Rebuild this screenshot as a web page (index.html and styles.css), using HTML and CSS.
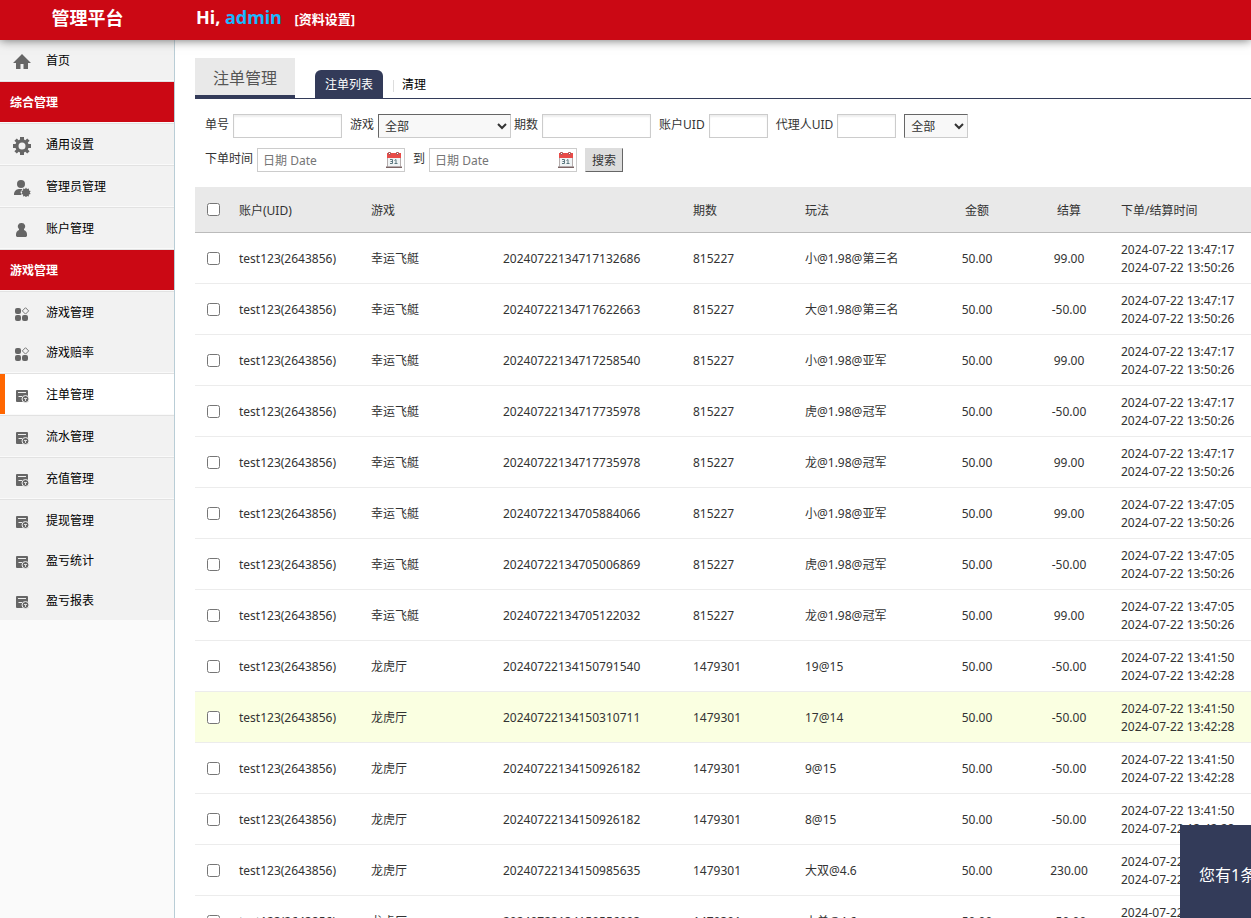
FILE: index.html
```html
<!DOCTYPE html>
<html lang="zh-CN">
<head>
<meta charset="UTF-8">
<title>管理平台</title>
<link rel="stylesheet" href="styles.css">
</head>
<body>
<svg class="sprite" aria-hidden="true">
	<symbol id="i-home" viewBox="0 0 18 18"><path d="M9 1 0 10h3v6h4.500v-5h3v5H15v-6h3z"/></symbol>
	<symbol id="i-gear" viewBox="0 0 18 18"><path fill-rule="evenodd" d="M7 0h4v2.600l1.400.6L14.200 1.400 16.600 3.800 14.800 5.600l.6 1.400H18v4h-2.600l-.6 1.400 1.800 1.800-2.400 2.400-1.800-1.800-1.400.6V18H7v-2.600l-1.400-.6-1.800 1.800-2.400-2.400 1.800-1.800L2.600 11H0V7h2.600l.6-1.400L1.400 3.800l2.400-2.400 1.800 1.800L7 2.600zM9 5.500a3.500 3.500 0 1 0 0 7 3.500 3.500 0 0 0 0-7z"/></symbol>
	<symbol id="i-admin" viewBox="0 0 18 18"><circle cx="8" cy="5" r="4"/><path d="M1 16c0-4 2-5.500 5-6h3.500l-2 3 1 3z"/><path d="m13 8.500 1 1.600 1.900-.6.1 1.900 1.700.6-1 1.500 1 1.500-1.800.6-.1 1.800-1.800-.4-1 1.400-1.100-1.400-1.800.4v-1.800l-1.800-.6 1-1.500-1-1.500 1.800-.6v-1.900l1.900.6z"/></symbol>
	<symbol id="i-user" viewBox="0 0 18 18"><path d="M8.500 2a3.500 3.500 0 0 1 2.500 6.200V9c2 .6 3 2.500 3 4.500V15l-1 1H4l-1-1v-1.500C3 11.500 4 9.600 6 9v-.8A3.500 3.500 0 0 1 8.500 2z"/></symbol>
	<symbol id="i-game" viewBox="0 0 18 18"><rect x="2" y="3" width="6" height="6" rx="2"/><rect x="2" y="10" width="6" height="6" rx="2"/><rect x="9" y="10" width="6" height="6" rx="2"/><path d="m12.500 2.700 3.200 3.200-3.200 3.200-3.200-3.200z" fill="none" stroke="#777"/></symbol>
	<symbol id="i-bill" viewBox="0 0 18 18"><rect x="3" y="3" width="12" height="12" rx="1"/><path d="M5 5.500h8M5.500 9.500H9" stroke="#eee" fill="none"/><circle cx="12.500" cy="12" r="3.500" stroke="#eee"/><path d="M11 11.500h3M12.500 11.500v2.500" stroke="#ddd" fill="none"/></symbol>
	<symbol id="i-cal" viewBox="0 0 16 16"><path d="M1 2h14v13H1z" fill="#f0f4f5"/><path d="M1 1h14v5H1z" fill="#e94b48"/><path d="M1.500 6v8.500M14.500 6v8.500" stroke="#b5adad"/><path d="M0 14.500h16v1.500H0z" fill="#7a6464"/><path d="M2.500.5h2v2h-2zM10.500.5h2v2h-2z" fill="#fff" stroke="#a55"/><path d="M4 7.500h2.500v4H4M4.500 9.500h2M8.500 8.500l1.500-1v4M8.500 11.500h3" fill="none" stroke="#5c7880"/></symbol>
</svg>
<header class="header">
	<h1 class="logo">管理平台</h1>
	<div class="hello">Hi, <span class="hello-name">admin</span> <a class="hello-set" href="#">[资料设置]</a></div>
</header>
<div class="wrap">
	<nav class="menu">
		<ul class="menu-group">
			<li><a href="#"><svg class="icon"><use href="#i-home"/></svg>首页</a></li>
		</ul>
		<h2 class="menu-title">综合管理</h2>
		<ul class="menu-group">
			<li><a href="#"><svg class="icon"><use href="#i-gear"/></svg>通用设置</a></li>
		</ul>
		<ul class="menu-group">
			<li><a href="#"><svg class="icon"><use href="#i-admin"/></svg>管理员管理</a></li>
		</ul>
		<ul class="menu-group">
			<li><a href="#"><svg class="icon"><use href="#i-user"/></svg>账户管理</a></li>
		</ul>
		<h2 class="menu-title">游戏管理</h2>
		<ul class="menu-group">
			<li><a href="#"><svg class="icon"><use href="#i-game"/></svg>游戏管理</a></li>
			<li><a href="#"><svg class="icon"><use href="#i-game"/></svg>游戏赔率</a></li>
		</ul>
		<ul class="menu-group active">
			<li><a href="#"><svg class="icon"><use href="#i-bill"/></svg>注单管理</a></li>
		</ul>
		<ul class="menu-group">
			<li><a href="#"><svg class="icon"><use href="#i-bill"/></svg>流水管理</a></li>
		</ul>
		<ul class="menu-group">
			<li><a href="#"><svg class="icon"><use href="#i-bill"/></svg>充值管理</a></li>
		</ul>
		<ul class="menu-group">
			<li><a href="#"><svg class="icon"><use href="#i-bill"/></svg>提现管理</a></li>
			<li><a href="#"><svg class="icon"><use href="#i-bill"/></svg>盈亏统计</a></li>
			<li><a href="#"><svg class="icon"><use href="#i-bill"/></svg>盈亏报表</a></li>
		</ul>
	</nav>
	<main class="main">
		<div class="tabs">
			<h3 class="tabs-title">注单管理</h3>
			<a class="tab current" href="#">注单列表</a>
			<a class="tab" href="#">清理</a>
		</div>
		<form class="search" method="get">
			<div class="search-row">
				<label for="tid">单号</label>
				<input type="text" id="tid" class="txt">
				<label for="gid">游戏</label>
				<select id="gid" class="sel sel-game"><option>全部</option></select>
				<label for="qs">期数</label>
				<input type="text" id="qs" class="txt">
				<label for="uid">账户UID</label>
				<input type="text" id="uid" class="txt txt-uid">
				<label for="fid">代理人UID</label>
				<input type="text" id="fid" class="txt txt-uid">
				<select id="status" class="sel" aria-label="状态"><option>全部</option></select>
			</div>
			<div class="search-row">
				<label for="start">下单时间</label>
				<span class="date"><input type="text" id="start" class="txt txt-date" placeholder="日期 Date"><svg class="date-icon"><use href="#i-cal"/></svg></span>
				<label for="end">到</label>
				<span class="date"><input type="text" id="end" class="txt txt-date" placeholder="日期 Date"><svg class="date-icon"><use href="#i-cal"/></svg></span>
				<button type="button" class="btn">搜索</button>
			</div>
		</form>
		<table class="list">
			<colgroup>
				<col class="c-check"><col class="c-name"><col class="c-name"><col class="c-order"><col class="c-issue"><col class="c-name"><col class="c-money"><col class="c-money"><col>
			</colgroup>
			<thead>
				<tr><th class="check"><input type="checkbox" aria-label="全选"></th><th>账户(UID)</th><th>游戏</th><th></th><th>期数</th><th>玩法</th><th class="mid">金额</th><th class="mid">结算</th><th>下单/结算时间</th></tr>
			</thead>
			<tbody>
				<tr><td class="check"><input type="checkbox" aria-label="选择"></td><td>test123(2643856)</td><td>幸运飞艇</td><td>20240722134717132686</td><td>815227</td><td>小@1.98@第三名</td><td class="mid">50.00</td><td class="mid">99.00</td><td>2024-07-22 13:47:17<br>2024-07-22 13:50:26</td></tr>
				<tr><td class="check"><input type="checkbox" aria-label="选择"></td><td>test123(2643856)</td><td>幸运飞艇</td><td>20240722134717622663</td><td>815227</td><td>大@1.98@第三名</td><td class="mid">50.00</td><td class="mid">-50.00</td><td>2024-07-22 13:47:17<br>2024-07-22 13:50:26</td></tr>
				<tr><td class="check"><input type="checkbox" aria-label="选择"></td><td>test123(2643856)</td><td>幸运飞艇</td><td>20240722134717258540</td><td>815227</td><td>小@1.98@亚军</td><td class="mid">50.00</td><td class="mid">99.00</td><td>2024-07-22 13:47:17<br>2024-07-22 13:50:26</td></tr>
				<tr><td class="check"><input type="checkbox" aria-label="选择"></td><td>test123(2643856)</td><td>幸运飞艇</td><td>20240722134717735978</td><td>815227</td><td>虎@1.98@冠军</td><td class="mid">50.00</td><td class="mid">-50.00</td><td>2024-07-22 13:47:17<br>2024-07-22 13:50:26</td></tr>
				<tr><td class="check"><input type="checkbox" aria-label="选择"></td><td>test123(2643856)</td><td>幸运飞艇</td><td>20240722134717735978</td><td>815227</td><td>龙@1.98@冠军</td><td class="mid">50.00</td><td class="mid">99.00</td><td>2024-07-22 13:47:17<br>2024-07-22 13:50:26</td></tr>
				<tr><td class="check"><input type="checkbox" aria-label="选择"></td><td>test123(2643856)</td><td>幸运飞艇</td><td>20240722134705884066</td><td>815227</td><td>小@1.98@亚军</td><td class="mid">50.00</td><td class="mid">99.00</td><td>2024-07-22 13:47:05<br>2024-07-22 13:50:26</td></tr>
				<tr><td class="check"><input type="checkbox" aria-label="选择"></td><td>test123(2643856)</td><td>幸运飞艇</td><td>20240722134705006869</td><td>815227</td><td>虎@1.98@冠军</td><td class="mid">50.00</td><td class="mid">-50.00</td><td>2024-07-22 13:47:05<br>2024-07-22 13:50:26</td></tr>
				<tr><td class="check"><input type="checkbox" aria-label="选择"></td><td>test123(2643856)</td><td>幸运飞艇</td><td>20240722134705122032</td><td>815227</td><td>龙@1.98@冠军</td><td class="mid">50.00</td><td class="mid">99.00</td><td>2024-07-22 13:47:05<br>2024-07-22 13:50:26</td></tr>
				<tr><td class="check"><input type="checkbox" aria-label="选择"></td><td>test123(2643856)</td><td>龙虎厅</td><td>20240722134150791540</td><td>1479301</td><td>19@15</td><td class="mid">50.00</td><td class="mid">-50.00</td><td>2024-07-22 13:41:50<br>2024-07-22 13:42:28</td></tr>
				<tr class="hover"><td class="check"><input type="checkbox" aria-label="选择"></td><td>test123(2643856)</td><td>龙虎厅</td><td>20240722134150310711</td><td>1479301</td><td>17@14</td><td class="mid">50.00</td><td class="mid">-50.00</td><td>2024-07-22 13:41:50<br>2024-07-22 13:42:28</td></tr>
				<tr><td class="check"><input type="checkbox" aria-label="选择"></td><td>test123(2643856)</td><td>龙虎厅</td><td>20240722134150926182</td><td>1479301</td><td>9@15</td><td class="mid">50.00</td><td class="mid">-50.00</td><td>2024-07-22 13:41:50<br>2024-07-22 13:42:28</td></tr>
				<tr><td class="check"><input type="checkbox" aria-label="选择"></td><td>test123(2643856)</td><td>龙虎厅</td><td>20240722134150926182</td><td>1479301</td><td>8@15</td><td class="mid">50.00</td><td class="mid">-50.00</td><td>2024-07-22 13:41:50<br>2024-07-22 13:42:28</td></tr>
				<tr><td class="check"><input type="checkbox" aria-label="选择"></td><td>test123(2643856)</td><td>龙虎厅</td><td>20240722134150985635</td><td>1479301</td><td>大双@4.6</td><td class="mid">50.00</td><td class="mid">230.00</td><td>2024-07-22 13:41:50<br>2024-07-22 13:42:28</td></tr>
				<tr><td class="check"><input type="checkbox" aria-label="选择"></td><td>test123(2643856)</td><td>龙虎厅</td><td>20240722134150556093</td><td>1479301</td><td>小单@4.6</td><td class="mid">50.00</td><td class="mid">-50.00</td><td>2024-07-22 13:41:50<br>2024-07-22 13:42:28</td></tr>
			</tbody>
		</table>
	</main>
</div>
<div class="notice">您有1条</div>
</body>
</html>
```
FILE: styles.css
```css
* {
	box-sizing: border-box;
}
body {
	margin: 0;
	height: 100vh;
	display: flex;
	flex-direction: column;
	overflow: hidden;
	font: 12px/18px "Noto Sans", "Noto Sans CJK SC", sans-serif;
	color: #333;
	background: #fff;
}
h1, h2, h3, ul {
	margin: 0;
	padding: 0;
	list-style: none;
}
a {
	color: #000;
	text-decoration: none;
}
input, select, button {
	font: inherit;
	color: inherit;
	margin: 0;
}
.sprite {
	display: none;
}

/* header */
.header {
	display: flex;
	flex: none;
	height: 40px;
	line-height: 36px;
	color: #fff;
	background: #cb0814;
	box-shadow: 0 0 10px #666;
	position: relative;
	z-index: 2;
}
.logo {
	width: 175px;
	font-size: 18px;
	text-align: center;
}
.hello {
	padding-left: 21px;
	font-size: 18px;
	font-weight: bold;
	line-height: 34px;
}
.hello-name {
	color: #1ab7ff;
}
.hello-set {
	margin-left: 8px;
	font-size: 13px;
	color: #fff;
}

.wrap {
	display: flex;
	flex: 1;
	min-height: 0;
}

/* left menu */
.menu {
	flex: none;
	width: 175px;
	background: #fafafa;
	border-right: 1px solid #b9cdd6;
}
.menu-group {
	background: #f2f2f2;
	border-top: 1px solid #e2e2e2;
	border-bottom: 1px solid #fafafa;
}
.menu-group:first-child {
	border-top: 0;
}
.menu-group a {
	display: flex;
	align-items: center;
	height: 40px;
	padding: 2px 0 0 13px;
	gap: 15px;
}
.menu-group .icon {
	width: 18px;
	height: 18px;
	margin-top: 2px;
	fill: #666;
}
.menu-group.active {
	background: #fff;
}
.active a {
	border-left: 5px solid #ff6600;
	padding-left: 8px;
}
.menu-title {
	height: 42px;
	padding-left: 10px;
	font-size: 12px;
	line-height: 42px;
	color: #fff;
	background: #cb0814;
	border-top: 1px solid #e2e2e2;
	border-bottom: 1px solid #fafafa;
}

/* content */
.main {
	flex: 1;
	min-width: 0;
	padding: 18px 0 0 20px;
	overflow: hidden;
}
.tabs {
	display: flex;
	align-items: flex-end;
	height: 41px;
	border-bottom: 1px solid #333b59;
}
.tabs-title {
	width: 100px;
	height: 40px;
	margin-right: 20px;
	font-size: 16px;
	font-weight: normal;
	line-height: 40px;
	text-align: center;
	color: #555;
	background: #e9e9e9;
	border-bottom: 3px solid #333b59;
}
.tab {
	height: 28px;
	padding: 0 10px;
	line-height: 30px;
}
.tab.current {
	color: #fff;
	background: #333b59;
	border-radius: 6px 6px 0 0;
}
.tab + .tab::before {
	content: "";
	display: inline-block;
	width: 1px;
	height: 12px;
	margin-right: 8px;
	vertical-align: middle;
	background: #ddd;
}
.search {
	display: flex;
	flex-direction: column;
	gap: 10px;
	padding: 15px 10px;
}
.search-row {
	display: flex;
	height: 24px;
	line-height: 22px;
}
.search-row label {
	margin-right: 4px;
	white-space: nowrap;
}
.txt {
	width: 109px;
	height: 24px;
	margin-right: 8px;
	padding: 0 5px;
	border: 1px solid #ccc;
	background: #fff;
	box-shadow: inset 0 2px 2px #eee;
}
.txt-uid {
	width: 59px;
}
.txt-date {
	width: 148px;
	box-shadow: none;
}
.date {
	position: relative;
}
.date-icon {
	position: absolute;
	top: 4px;
	right: 11px;
	width: 16px;
	height: 16px;
}
.sel {
	width: 64px;
	height: 24px;
	padding: 0 2px;
	border: 1px solid #ccc;
	border-top-color: #666;
	border-left-color: #666;
	border-radius: 0;
	background: #f8f8f8;
}
.sel-game {
	width: 133px;
	margin-right: 3px;
}
.btn {
	height: 24px;
	padding: 1px 6px 0;
	background: #ddd;
	border: 1px solid #ddd;
	border-right-color: #666;
	border-bottom-color: #666;
}

/* bet list */
.list {
	width: 100%;
	table-layout: fixed;
	border-collapse: separate;
	border-spacing: 0;
}
.list th,
.list td {
	padding: 2px 6px 0;
	text-align: left;
	white-space: nowrap;
}
.list th {
	height: 46px;
	font-weight: normal;
	background: #e9e9e9;
	border-bottom: 1px solid #bbb;
}
.list td {
	height: 51px;
	border-bottom: 1px solid #ececec;
}
.list .mid {
	text-align: center;
}
.list .check {
	padding: 0 0 0 12px;
}
.list input {
	display: block;
}
.list .hover td {
	background: #faffe1;
}
.c-check {
	width: 38px;
}
.c-name {
	width: 132px;
}
.c-order {
	width: 190px;
}
.c-issue {
	width: 112px;
}
.c-money {
	width: 92px;
}

.notice {
	position: fixed;
	right: -129px;
	bottom: -7px;
	z-index: 3;
	width: 200px;
	height: 100px;
	padding-left: 19px;
	font-size: 16px;
	line-height: 100px;
	color: #fff;
	background: #333b59;
}
```
